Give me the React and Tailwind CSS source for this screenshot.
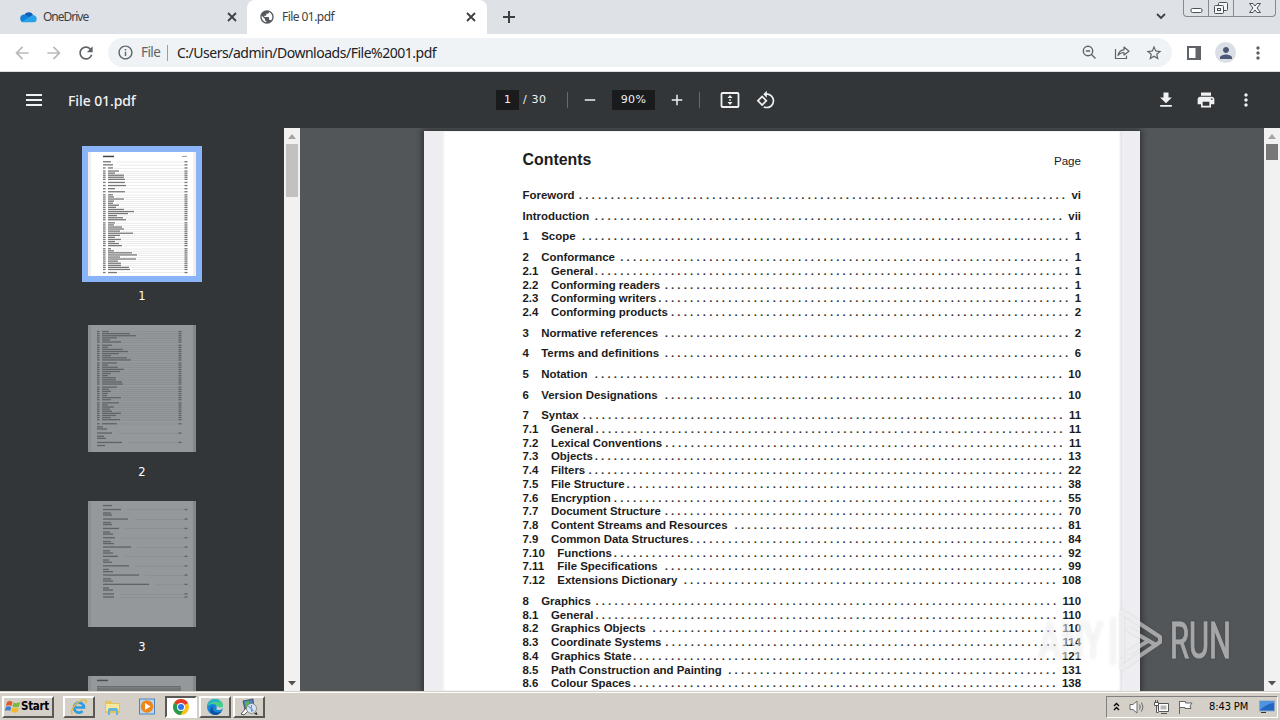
import React from 'react';
import {
  MdArrowBack,
  MdArrowForward,
  MdRefresh,
  MdInfoOutline,
  MdPublic,
  MdAdd,
  MdRemove,
  MdMoreVert,
  MdGetApp,
  MdPrint,
  MdPerson,
  MdStarBorder,
  MdRotate90DegreesCcw,
} from 'react-icons/md';

const sections = [
  [{ title: 'Foreword', page: 'vi', dots: 77 }],
  [{ title: 'Introduction', page: 'vii', dots: 74 }],
  [{ num: '1', title: 'Scope', page: '1', dots: 77 }],
  [
    { num: '2', title: 'Conformance', page: '1', dots: 71 },
    { num: '2.1', title: 'General', page: '1', dots: 75 },
    { num: '2.2', title: 'Conforming readers', page: '1', dots: 64 },
    { num: '2.3', title: 'Conforming writers', page: '1', dots: 65 },
    { num: '2.4', title: 'Conforming products', page: '2', dots: 63 },
  ],
  [{ num: '3', title: 'Normative references', page: '2', dots: 64 }],
  [{ num: '4', title: 'Terms and definitions', page: '6', dots: 64 }],
  [{ num: '5', title: 'Notation', page: '10', dots: 74 }],
  [{ num: '6', title: 'Version Designations', page: '10', dots: 63 }],
  [
    { num: '7', title: 'Syntax', page: '11', dots: 76 },
    { num: '7.1', title: 'General', page: '11', dots: 74 },
    { num: '7.2', title: 'Lexical Conventions', page: '11', dots: 63 },
    { num: '7.3', title: 'Objects', page: '13', dots: 74 },
    { num: '7.4', title: 'Filters', page: '22', dots: 75 },
    { num: '7.5', title: 'File Structure', page: '38', dots: 69 },
    { num: '7.6', title: 'Encryption', page: '55', dots: 71 },
    { num: '7.7', title: 'Document Structure', page: '70', dots: 63 },
    { num: '7.8', title: 'Content Streams and Resources', page: '81', dots: 52 },
    { num: '7.9', title: 'Common Data Structures', page: '84', dots: 59 },
    { num: '7.10', title: 'Functions', page: '92', dots: 71 },
    { num: '7.11', title: 'File Specifications', page: '99', dots: 63 },
    { num: '7.12', title: 'Extensions Dictionary', page: '108', dots: 59 },
  ],
  [
    { num: '8', title: 'Graphics', page: '110', dots: 73 },
    { num: '8.1', title: 'General', page: '110', dots: 73 },
    { num: '8.2', title: 'Graphics Objects', page: '110', dots: 64 },
    { num: '8.3', title: 'Coordinate Systems', page: '114', dots: 62 },
    { num: '8.4', title: 'Graphics State', page: '121', dots: 67 },
    { num: '8.5', title: 'Path Construction and Painting', page: '131', dots: 52 },
    { num: '8.6', title: 'Colour Spaces', page: '138', dots: 67 },
  ],
];

// [y, title width, kind] inside a 108px wide thumbnail; kind 1 = numbered, 2 = no page number
const thumbOne = [
  [9.7, 8, 0], [12.8, 10, 0], [15.9, 5, 1], [19, 11, 1], [21.1, 7, 1], [23.2, 16, 1], [25.2, 16, 1], [27.3, 17, 1],
  [30.4, 17, 1], [33.5, 18, 1], [36.6, 7, 1], [39.7, 17, 1], [42.8, 5, 1], [44.9, 6, 1], [47, 16, 1], [49.1, 6, 1],
  [51.2, 5, 1], [53.2, 11, 1], [55.3, 8, 1], [57.4, 16, 1], [59.5, 26, 1], [61.5, 20, 1], [63.6, 9, 1], [65.7, 15, 1],
  [67.7, 18, 1], [70.8, 7, 1], [72.9, 6, 1], [75, 14, 1], [77, 16, 1], [79.1, 12, 1], [81.2, 25, 1], [83.3, 12, 1],
  [85.3, 7, 1], [87.4, 13, 1], [89.5, 7, 1], [91.5, 11, 1], [93.6, 14, 1], [96.7, 3, 1], [98.8, 6, 1], [100.8, 24, 1],
  [102.9, 29, 1], [105, 12, 1], [107, 28, 1], [109.1, 10, 1], [111.2, 13, 1], [113.3, 13, 1], [115.3, 21, 1], [117.4, 22, 1],
  [120.5, 9, 1],
];
const thumbTwo = [
  [6.5, 7, 1], [8.6, 28, 1], [10.7, 34, 1], [12.8, 15, 1], [14.9, 8, 1], [17, 19, 1], [20.2, 10, 1], [22.3, 6, 1],
  [24.4, 21, 1], [26.5, 26, 1], [28.6, 17, 1], [30.7, 9, 1], [32.8, 25, 1], [34.9, 29, 1], [38, 15, 1], [40.1, 6, 1],
  [42.2, 16, 1], [44.3, 22, 1], [46.4, 18, 1], [48.5, 9, 1], [50.6, 6, 1], [52.7, 14, 1], [54.8, 14, 1], [56.9, 20, 1],
  [59, 21, 1], [62.1, 15, 1], [64.2, 7, 1], [66.3, 9, 1], [68.4, 6, 1], [70.5, 5, 1], [72.6, 19, 1], [74.7, 9, 1],
  [77.8, 17, 1], [79.9, 6, 1], [82, 12, 1], [84.1, 8, 1], [86.2, 10, 1], [88.3, 19, 1], [90.4, 14, 1], [92.5, 9, 1],
  [94.6, 18, 1], [98.7, 15, 1], [101.8, 6, 2], [103.9, 10, 2], [108, 15, 0], [111.2, 7, 2], [113.3, 9, 2], [117.4, 25, 0],
  [120.5, 8, 2],
];
const thumbThree = [
  [4.5, 9, 2], [8.5, 18, 0], [12, 8, 2], [14, 9, 2], [18, 25, 0], [21.5, 8, 2], [23.5, 9, 2], [27.4, 16, 0],
  [31, 7, 2], [33, 10, 2], [36.7, 12, 0], [40.5, 8, 2], [42.5, 11, 2], [46, 28, 0], [49.8, 7, 2], [52, 10, 2],
  [55.3, 15, 0], [59, 6, 2], [61.2, 9, 2], [64.8, 26, 0], [68.4, 6, 2], [70.6, 10, 2], [74, 36, 0], [77.8, 8, 2],
  [80, 10, 2], [83.3, 46, 0], [87, 6, 2], [89, 10, 2], [92.9, 11, 0], [96, 11, 0],
];

function PageThumb({ rows, left, height, dim, heading }) {
  return (
    <svg width="108" height={height} viewBox={`0 0 108 ${height}`} className={dim ? 'block bg-[#94989b]' : 'block bg-white'}>
      <rect x="0" width="3" height={height} fill={dim ? '#8b8f92' : '#f1efe8'} />
      <rect x="105" width="3" height={height} fill={dim ? '#84888b' : '#f3efe9'} />
      {heading && <rect x={left} y="3.7" width="11" height="1.5" fill={dim ? '#4a4e50' : '#444'} />}
      {heading && !dim && <rect x="94" y="3.9" width="5" height="1" fill="#999" />}
      {rows.map(([y, w, kind]) => {
        const numbered = kind === 1;
        return (
          <g key={y} fill={dim ? '#5f6366' : '#777'}>
            {numbered && <rect x={left} y={y - 0.6} width="2.6" height="1.3" />}
            <rect x={numbered ? left + 5 : left} y={y - 0.6} width={w} height="1.3" />
            {kind !== 2 && (
              <>
                <rect x={left + w + 6} y={y + 0.1} width={77 - w} height="0.4" opacity="0.35" />
                <rect x={left + 81.5} y={y - 0.6} width="3" height="1.3" />
              </>
            )}
          </g>
        );
      })}
    </svg>
  );
}

function TocRow({ num, title, page, dots }) {
  const numWidth = !num ? '' : num.length === 1 ? 'w-[18.7px]' : num.length === 3 ? 'w-[28.4px]' : 'w-[34.8px]';
  return (
    <div className="flex h-[13.75px] leading-[13.75px] whitespace-nowrap">
      {num && <span className={`${numWidth} shrink-0`}>{num}</span>}
      <span className="shrink-0">{title}</span>
      <span className="ml-auto text-[#333]">{'. '.repeat(dots).trim()}</span>
      <span className="ml-[6.4px] shrink-0">{page}</span>
    </div>
  );
}

function OneDriveIcon() {
  return (
    <svg width="17" height="12" viewBox="0 0 17 12">
      <path d="M4 4.500A5 5 0 0 1 13 3.600L10 8Z" fill="#0f5fb8" />
      <path d="M.3 8A3.800 3.800 0 0 1 5.500 3.800L13 8.500 4 11.300A3.600 3.600 0 0 1 .3 8Z" fill="#1280d8" />
      <path d="M2 10.600 12.500 4A4 4 0 0 1 16.700 8 3.300 3.300 0 0 1 13.500 11.300H4A4 4 0 0 1 2 10.600Z" fill="#28a0ea" />
    </svg>
  );
}

function CloseIcon() {
  return (
    <svg width="14" height="14" viewBox="0 0 14 14" fill="none" stroke="currentColor" strokeWidth="1.800">
      <path d="M3 3l8 8M11 3l-8 8" />
    </svg>
  );
}

function TabStrip() {
  return (
    <div className="flex h-[34px] bg-[#dee1e6] text-[12px] text-[#3c4043]">
      <div className="flex w-[247px] items-center pr-[8px] pl-5">
        <OneDriveIcon />
        <span className="ml-[6px] flex-1 tracking-[-1px]">OneDrive</span>
        <CloseIcon />
      </div>
      <div className="flex w-[240px] items-center rounded-t-lg bg-white pr-[9px] pl-[12px]">
        <MdPublic size={16} className="text-[#55585c]" />
        <span className="ml-[7px] flex-1 tracking-[-0.55px]">File 01.pdf</span>
        <CloseIcon />
      </div>
      <div className="flex flex-1 items-center pl-[16px]">
        <svg width="12" height="12" viewBox="0 0 12 12" fill="none" stroke="currentColor" strokeWidth="2">
          <path d="M6 0v12M0 6h12" />
        </svg>
      </div>
      <svg width="10" height="7" viewBox="0 0 10 7" fill="none" stroke="currentColor" strokeWidth="1.800" className="mt-[13px] mr-[17px]">
        <path d="M1 1l4 4 4-4" />
      </svg>
      <div className="mr-1 flex h-[17px] w-[93px] rounded-b border border-t-0 border-[#858992] text-[#4c5058]">
        <div className="flex w-[25px] justify-center border-r border-[#858992]">
          <svg width="13" height="16" viewBox="0 0 13 16">
            <rect x="1" y="8.500" width="11" height="4" rx="1.500" fill="#fff" stroke="currentColor" />
          </svg>
        </div>
        <div className="flex w-[25px] justify-center border-r border-[#858992]">
          <svg width="14" height="16" viewBox="0 0 14 16" fill="#f4f5f7" stroke="currentColor">
            <rect x="4.500" y="2.500" width="9" height="8" rx="1" />
            <rect x=".5" y="5.500" width="9" height="8" rx="1" />
            <rect x="3.500" y="8.500" width="3" height="2" />
          </svg>
        </div>
        <div className="flex flex-1 justify-center">
          <svg width="12" height="16" viewBox="0 0 12 16">
            <path d="M.5 3.500H4L6 6 8 3.500H11.500L8 8 11.500 12.500H8L6 10 4 12.500H.5L4 8Z" fill="#f4f5f7" stroke="currentColor" />
          </svg>
        </div>
      </div>
    </div>
  );
}

function AddressBar() {
  return (
    <div className="flex h-[38px] items-center border-b border-[#dcdee1] bg-white text-[#5f6368]">
      <MdArrowBack size={20} className="ml-3 text-[#b8babd]" />
      <MdArrowForward size={20} className="ml-3 text-[#b8babd]" />
      <MdRefresh size={20} className="ml-3" />
      <div className="ml-3 flex h-[29px] w-[1064px] items-center rounded-full bg-[#f0f3f6] pl-[9px]">
        <MdInfoOutline size={17} />
        <span className="ml-[7px] w-[19px] text-[13.5px] tracking-[-0.6px]">File</span>
        <span className="ml-[7px] h-4 w-px bg-[#9b9ea2]" />
        <span className="ml-[9px] flex-1 text-[14px] tracking-[-0.49px] whitespace-nowrap text-[#202124]">
          C:/Users/admin/Downloads/File%2001.pdf
        </span>
        <svg width="15" height="15" viewBox="0 0 15 15" fill="none" stroke="currentColor" strokeWidth="1.400">
          <circle cx="6" cy="6" r="4.700" />
          <path d="M3.800 6h4.400M9.500 9.500l4 4" />
        </svg>
        <svg width="16" height="15" viewBox="0 0 16 15" fill="none" stroke="currentColor" strokeWidth="1.200" className="ml-[17px]">
          <path d="M1.500 4v9.500h11V10.500" />
          <path d="M4 10.500C4.500 7 7 5 10 4.800V2L15 6.200 10 10V7.500C7.500 7.500 5.500 8.500 4 10.500Z" strokeLinejoin="round" />
        </svg>
        <MdStarBorder size={18} className="mr-[9px] ml-[15px]" />
      </div>
      <svg width="14" height="14" viewBox="0 0 14 14" className="ml-[15px]">
        <path d="M1 1h12v12H1z" fill="none" stroke="currentColor" strokeWidth="2" />
        <path d="M8.500 1H13v12H8.500z" fill="currentColor" />
      </svg>
      <div className="ml-[14px] flex size-[21px] items-center justify-center rounded-full bg-[#dadfe6] text-[#4a5875]">
        <MdPerson size={18} />
      </div>
      <MdMoreVert size={20} className="ml-[12px]" />
    </div>
  );
}

function PdfToolbar() {
  return (
    <div className="flex h-14 items-center bg-[#323639] font-['DejaVu_Sans',sans-serif] text-[11px] text-[#f1f1f1]">
      <svg width="16" height="12" viewBox="0 0 16 12" className="ml-[26px]" fill="currentColor">
        <path d="M0 0h16v2H0zM0 5h16v2H0zM0 10h16v2H0z" />
      </svg>
      <span className="ml-[26px] w-[428px] font-['Noto_Sans','Open_Sans',sans-serif] text-[14px] font-medium tracking-[-0.1px]">File 01.pdf</span>
      <span className="flex h-5 w-[23px] items-center justify-center bg-[#191b1c]">1</span>
      <span className="ml-[4px] w-[44px] tracking-[0.6px] whitespace-pre">/ 30</span>
      <span className="h-4 w-px bg-[#686b6d]" />
      <MdRemove size={18} className="ml-[13px]" />
      <span className="ml-[13px] flex h-5 w-[43px] items-center justify-center bg-[#191b1c] tracking-[0.4px]">90%</span>
      <MdAdd size={18} className="ml-[13px]" />
      <span className="ml-[13px] h-4 w-px bg-[#686b6d]" />
      <svg width="20" height="16" viewBox="0 0 20 16" className="ml-[20px]" fill="currentColor">
        <rect x="1.500" y="1" width="17" height="14" rx="1" fill="none" stroke="currentColor" strokeWidth="1.800" />
        <path d="M10 3l2.500 3h-5zM10 13l2.500-3h-5zM9.200 7.300h1.600v1.400H9.200z" />
      </svg>
      <MdRotate90DegreesCcw size={20} className="ml-[16px]" />
      <MdGetApp size={20} className="ml-auto" />
      <MdPrint size={20} className="ml-5" />
      <MdMoreVert size={20} className="mr-6 ml-5" />
    </div>
  );
}

function Scrollbar({ thumb }) {
  return (
    <div className="flex w-4 shrink-0 flex-col items-center bg-[#f1f1f1]">
      <svg width="16" height="16" viewBox="0 0 16 16">
        <path d="M4 11l4-5 4 5z" fill="#a3a3a3" />
      </svg>
      <div className={thumb} />
      <svg width="16" height="16" viewBox="0 0 16 16" className="mt-auto">
        <path d="M4 6h8l-4 4.500z" fill="#505050" />
      </svg>
    </div>
  );
}

function Sidebar() {
  const label = 'w-[108px] text-center leading-4';
  return (
    <div className="flex w-[284px] shrink-0 flex-col overflow-hidden bg-[#323639] pt-[18px] font-['DejaVu_Sans',sans-serif] text-[11.5px] text-white">
      <div className="ml-[82px] w-[120px] shrink-0 border-6 border-[#8ab4f8]">
        <PageThumb rows={thumbOne} left={15} height={124} heading />
      </div>
      <div className="mt-[6px] ml-[88px] shrink-0">
        <div className={label}>1</div>
      </div>
      <div className="mt-[21px] ml-[88px] shrink-0">
        <PageThumb rows={thumbTwo} left={9} height={127} dim />
        <div className={`${label} mt-[12px]`}>2</div>
      </div>
      <div className="mt-[21px] ml-[88px] shrink-0">
        <PageThumb rows={thumbThree} left={15} height={126} dim />
        <div className={`${label} mt-[12px]`}>3</div>
      </div>
      <div className="mt-[21px] ml-[88px] shrink-0">
        <PageThumb rows={[[10.8, 84, 2], [13, 84, 2], [15, 84, 2]]} left={9} height={126} dim heading />
      </div>
    </div>
  );
}

function Watermark() {
  return (
    <svg
      width="200"
      height="68"
      viewBox="0 0 200 68"
      className="absolute top-[478px] left-[738px] overflow-visible font-['Roboto',sans-serif] drop-shadow-[0_0_1.5px_rgba(0,0,0,0.2)]"
    >
      <g fill="#fff" stroke="#fff" strokeWidth="1" opacity="0.5" fontSize="50">
        <text x="1" y="52" textLength="64" lengthAdjust="spacingAndGlyphs">ANY</text>
        <text x="132" y="52" textLength="61" lengthAdjust="spacingAndGlyphs">RUN</text>
      </g>
      <g fill="none" stroke="#fff" strokeWidth="4" strokeLinejoin="round" strokeLinecap="round" opacity="0.5">
        <path d="M75 13v44" />
        <path d="M84 50V6l38 25v5L84 62v-8" />
        <path d="M92 24l26 15M92 46l18-11" />
      </g>
    </svg>
  );
}

function Viewer() {
  return (
    <div className="relative flex flex-1 justify-center overflow-hidden bg-[#525659] font-['Liberation_Sans',Arial,sans-serif]">
      <div className="mt-[3px] h-[560px] w-[716px] shrink-0 border-x-[18px] border-[#ededf2] bg-white pr-[41px] pl-[80.5px] text-[#1c1c1c] shadow-[0_0_6px_2px_rgba(0,0,0,0.4),inset_-2px_0_2px_#e4e4e8,inset_2px_0_2px_#f0f0f3]">
        <div className="flex items-baseline justify-between pt-[19px] leading-5">
          <h1 className="text-[15.9px] font-bold">Contents</h1>
          <span className="text-[11.6px]">Page</span>
        </div>
        <div className="flex flex-col gap-[6.875px] pt-[18.200px] text-[11.45px] font-bold">
          {sections.map((rows) => (
            <div key={rows[0].title}>
              {rows.map((row) => (
                <TocRow key={row.title} {...row} />
              ))}
            </div>
          ))}
        </div>
      </div>
      <Watermark />
    </div>
  );
}

function IeIcon() {
  return (
    <svg width="18" height="18" viewBox="0 0 18 18" fill="none">
      <path d="M4.500 9.500h9.500a5 5 0 1 0-1.400 3.600" stroke="#2f9be0" strokeWidth="2.600" />
      <path d="M2.500 16C-.5 14 4 6.500 10 3.200 14 1 18 1.500 15.500 5.500" stroke="#e8b93a" strokeWidth="1.400" />
    </svg>
  );
}

function FolderIcon() {
  return (
    <svg width="18" height="18" viewBox="0 0 18 18">
      <path d="M1 3h6l1 2h8v10H1z" fill="#e8c35a" />
      <path d="M2 6h13v7H2z" fill="#f8e79c" />
      <path d="M4 17v-5q0-2 2-2h6q2 0 2 2v5h-2v-4H6v4z" fill="#62b5dd" />
    </svg>
  );
}

function MediaIcon() {
  return (
    <svg width="18" height="18" viewBox="0 0 18 18">
      <rect x="1.500" y="1" width="15" height="15" fill="#b9d7ee" stroke="#4c85bd" />
      <circle cx="9" cy="8.500" r="6.200" fill="#f0851c" />
      <path d="M7 5l5.500 3.500L7 12z" fill="#fff" />
    </svg>
  );
}

function ChromeIcon() {
  return (
    <svg width="18" height="18" viewBox="0 0 18 18">
      <circle cx="9" cy="9" r="8" fill="#fbc116" />
      <path d="M9 9 2.100 5A8 8 0 0 1 16 5Z" fill="#e33b2e" />
      <path d="M9 9 2.100 5A8 8 0 0 0 8.500 17L12 11Z" fill="#279c4d" />
      <circle cx="9" cy="9" r="4" fill="#fff" />
      <circle cx="9" cy="9" r="3" fill="#2f75e8" />
    </svg>
  );
}

function EdgeIcon() {
  return (
    <svg width="18" height="18" viewBox="0 0 18 18">
      <circle cx="9" cy="9" r="8" fill="#1785d8" />
      <path d="M1 9C1.500 4 5 1 9.500 1 14 1 17 4 17 7.500S13 12 11 11.500C12 9 10.500 6 7 6 4 6 2 7.500 1 9Z" fill="#46cf88" />
      <path d="M1 8.500C1.500 4 5 1 9 1c3 0 5 2 5 4C10 2.500 4 3.500 1 8.500Z" fill="#26b5c8" />
      <path d="M7 8c-2 5 3 8 8.500 5.500C13 17.500 8 18 5 15 3.500 12.500 4.500 9.500 7 8Z" fill="#104f9d" />
      <path d="M17.500 8.500q-1 3.500-4.500 3.500-3 0-2.500-1.500 1-2-.5-3.500 3 4 7.500 1.500z" fill="#d4d0c8" />
    </svg>
  );
}

function ToolsIcon() {
  return (
    <svg width="20" height="20" viewBox="0 0 20 20">
      <path d="M4 4l10-2 1 9-9 2z" fill="#4d7fca" stroke="#333" strokeWidth=".7" />
      <path d="M6 5l4-1v7H7z" fill="#57b84c" />
      <path d="M2 17l5-6 3 2-5 5z" fill="#fff" stroke="#333" strokeWidth=".8" />
      <circle cx="12.500" cy="11.500" r="5" fill="#dbe7f5" stroke="#777" strokeWidth=".8" />
      <path d="M9.500 9l5 5M12.500 8v7" stroke="#6f9bd6" strokeWidth="1.200" />
      <path d="M15 17l2.500-2 1 3z" fill="#222" />
    </svg>
  );
}

function Taskbar() {
  const raised = 'flex h-[22px] w-8 items-center justify-center border-2 border-t-white border-l-white border-r-[#5a5854] border-b-[#5a5854]';
  return (
    <div className="flex h-[29px] items-center bg-[#d4d0c8] pt-[2px] font-['DejaVu_Sans_Condensed','DejaVu_Sans',sans-serif] text-[11px] text-black shadow-[inset_0_1px_0_#d4d0c8,inset_0_2px_0_#fff]">
      <div className="ml-[2px] flex h-[22px] w-[52px] items-center border-2 border-t-white border-l-white border-r-[#5a5854] border-b-[#5a5854] pl-px">
        <svg width="16" height="16" viewBox="0 0 16 16" className="shrink-0">
          <path d="M2 3Q5 1 7.500 3L6.500 7Q4 5.500 1 7Z" fill="#e5572b" />
          <path d="M8.500 3.500Q11.500 5 15 3L14 7.500Q10.500 9 7.500 7.500Z" fill="#79b83d" />
          <path d="M.8 8Q3.500 6.500 6.200 8L5.200 12Q3 10.500 0 12Z" fill="#3b7fd1" />
          <path d="M7.200 8.500Q10 10 13.700 8.500L12.700 13Q9.500 14.500 6.200 12.500Z" fill="#f4b92b" />
        </svg>
        <span className="pt-px text-[11.5px] font-bold tracking-[-0.3px]">Start</span>
      </div>
      <div className={`${raised} ml-[9px]`}><IeIcon /></div>
      <div className="ml-[9px] flex"><FolderIcon /></div>
      <div className="ml-[16px] flex"><MediaIcon /></div>
      <div className="ml-[9px] flex h-[22px] w-8 items-center justify-center border-2 border-t-[#5a5854] border-l-[#5a5854] border-r-white border-b-white bg-white">
        <ChromeIcon />
      </div>
      <div className={`${raised} ml-[2px]`}><EdgeIcon /></div>
      <div className={`${raised} ml-[2px]`}><ToolsIcon /></div>
      <div className="mr-[2px] ml-auto flex h-[22px] w-[172px] items-center border border-t-[#808080] border-l-[#808080] border-r-white border-b-white pl-[6px]">
        <svg width="7" height="9" viewBox="0 0 7 9" fill="none" stroke="#000" strokeWidth="1.300">
          <path d="M1 4l2.500-2.500L6 4M1 8l2.500-2.500L6 8" />
        </svg>
        <svg width="17" height="16" viewBox="0 0 17 16" className="ml-[9px]" fill="#fff" stroke="#6a6a6a">
          <path d="M1 5.500h3L8 2v12l-4-3.500H1z" />
          <path d="M10.500 5.500q1.500 2.500 0 5M12.500 3.500q3 4.500 0 9" fill="none" />
        </svg>
        <svg width="17" height="16" viewBox="0 0 17 16" className="ml-[7px]" fill="#fff" stroke="#555">
          <path d="M5.500 4.500h10v8h-10zM8 14.500h6" />
          <path d="M7.500 6.500h6v4h-6z" fill="#b7b7b7" stroke="none" />
          <path d="M1.500 3.500h4v3h-4zM2.500 1v2.500M4.500 1v2.500M3.500 6.500v7h2" />
        </svg>
        <svg width="17" height="16" viewBox="0 0 17 16" className="ml-[7px]" fill="#fff" stroke="#666">
          <path d="M2.500 15V2M2.500 2.500h6v1.500h6.500l-2 3 1 2.500H8V8.500H2.500z" />
        </svg>
        <span className="ml-[15px] flex-1 pt-px tracking-[-0.1px] whitespace-nowrap">8:43 PM</span>
        <svg width="16" height="14" viewBox="0 0 16 14" className="mr-[2px]">
          <rect x=".5" y="1" width="15" height="10" fill="#2166c0" stroke="#8ba9cf" />
          <path d="M1 10Q8 3 15 3V1.500H1z" fill="#4f94df" />
          <path d="M2 12.500h5" stroke="#333" />
        </svg>
      </div>
    </div>
  );
}

function App() {
  return (
    <div className="flex h-[720px] w-[1280px] flex-col overflow-hidden font-['Noto_Sans','Open_Sans',sans-serif]">
      <TabStrip />
      <AddressBar />
      <PdfToolbar />
      <div className="flex h-[563px]">
        <Sidebar />
        <Scrollbar thumb="h-[53px] w-3 bg-[#c1c1c1]" />
        <Viewer />
        <Scrollbar thumb="h-4 w-3 bg-[#787878]" />
      </div>
      <Taskbar />
    </div>
  );
}

export default App;
